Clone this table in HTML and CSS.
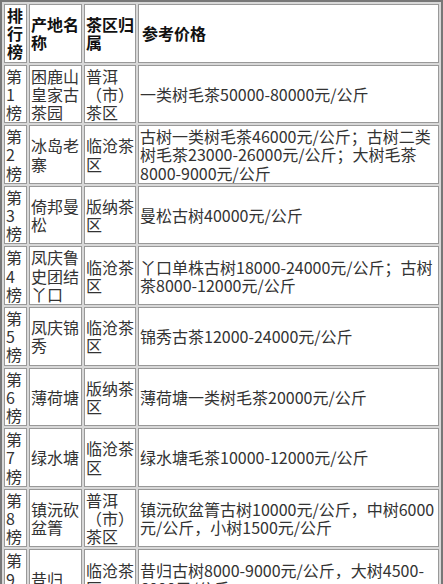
FILE: index.html
```html
<!DOCTYPE html>
<html lang="zh">
<head>
<meta charset="utf-8">
<link rel="stylesheet" href="styles.css">
</head>
<body>
<table class="rank">
  <tr class="head">
    <td class="c1">排行榜</td><td class="c2">产地名称</td><td class="c3">茶区归属</td><td class="c4">参考价格</td>
  </tr>
  <tr><td>第1榜</td><td>困鹿山皇家古茶园</td><td>普洱（市）茶区</td><td>一类树毛茶50000-80000元/公斤</td></tr>
  <tr><td>第2榜</td><td>冰岛老寨</td><td>临沧茶区</td><td>古树一类树毛茶46000元/公斤；古树二类树毛茶23000-26000元/公斤；大树毛茶8000-9000元/公斤</td></tr>
  <tr><td>第3榜</td><td>倚邦曼松</td><td>版纳茶区</td><td>曼松古树40000元/公斤</td></tr>
  <tr><td>第4榜</td><td>凤庆鲁史团结丫口</td><td>临沧茶区</td><td>丫口单株古树18000-24000元/公斤；古树茶8000-12000元/公斤</td></tr>
  <tr><td>第5榜</td><td>凤庆锦秀</td><td>临沧茶区</td><td>锦秀古茶12000-24000元/公斤</td></tr>
  <tr><td>第6榜</td><td>薄荷塘</td><td>版纳茶区</td><td>薄荷塘一类树毛茶20000元/公斤</td></tr>
  <tr><td>第7榜</td><td>绿水塘</td><td>临沧茶区</td><td>绿水塘毛茶10000-12000元/公斤</td></tr>
  <tr><td>第8榜</td><td>镇沅砍盆箐</td><td>普洱（市）茶区</td><td>镇沅砍盆箐古树10000元/公斤，中树6000元/公斤，小树1500元/公斤</td></tr>
  <tr><td>第9榜</td><td>昔归</td><td>临沧茶区</td><td>昔归古树8000-9000元/公斤，大树4500-6000元/公斤</td></tr>
</table>
</body>
</html>
```
FILE: styles.css
```css
html, body {
  margin: 0;
  padding: 0;
  background: #fff;
}
body {
  font-family: "Noto Sans CJK SC", "Noto Sans", sans-serif;
  font-size: 16px;
  color: #333;
}
.rank {
  width: 443px;
  table-layout: fixed;
  border: 2px solid #777;
  border-spacing: 2px;
  background: #d8d8d8;
}
.rank td {
  box-sizing: border-box;
  background: #fff;
  border: 1px solid #999;
  padding: 1px 0 1px 1px;
  line-height: 18.2px;
  vertical-align: middle;
}
.rank td.c1 { width: 23px; padding-left: 2px; }
.rank td.c2 { width: 53px; }
.rank td.c3 { width: 52px; }
.rank td.c4 { width: 301px; padding-left: 3px; }
.head td {
  font-weight: bold;
  color: #111;
}
```
